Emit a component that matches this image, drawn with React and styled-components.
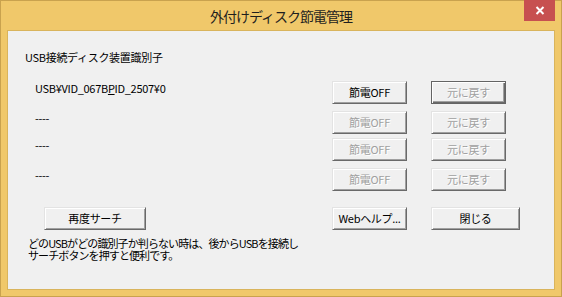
import React from "react";
import styled, { createGlobalStyle } from "styled-components";

const GlobalStyle = createGlobalStyle`
  html, body { margin: 0; padding: 0; background: #ffffff; }
  body { width: 562px; height: 297px; overflow: hidden; }
`;

const FONT = `"Noto Sans CJK JP", "Noto Sans", sans-serif`;

const Window = styled.div`
  box-sizing: border-box;
  width: 562px;
  height: 297px;
  background: #f0c86a;
  border: 1px solid #c9a24e;
  display: flex;
  flex-direction: column;
  font-family: ${FONT};
`;

const TitleBar = styled.div`
  height: 29px;
  display: grid;
  grid-template-columns: 1fr auto 1fr;
  align-items: center;
`;

const Title = styled.div`
  grid-column: 2;
  font-size: 14px;
  letter-spacing: -1px;
  color: #1e1e1e;
  line-height: 16px;
  padding-top: 1px;
`;

const CloseButton = styled.div`
  grid-column: 3;
  justify-self: end;
  align-self: start;
  margin-top: -1px;
  margin-right: 6px;
  width: 31px;
  height: 21px;
  background: #c75050;
  display: flex;
  align-items: center;
  justify-content: center;
`;

const Client = styled.div`
  flex: 1;
  margin: 0 6px 6px 6px;
  border: 1px solid #d9b45c;
  background: #f0f0f0;
  padding: 20px 0 0 17px;
  display: flex;
  flex-direction: column;
  font-size: 11px;
  line-height: 13px;
  letter-spacing: -0.3px;
  color: #000;
`;

const Label = styled.div`
  height: 13px;
`;

const Rows = styled.div`
  margin-top: 17px;
  margin-left: 10px;
  display: flex;
  flex-direction: column;
`;

const Row = styled.div`
  display: grid;
  grid-template-columns: 273px 75px 75px;
  column-gap: 24px;
  margin-top: ${(p) => p.$gap}px;
`;

const DeviceId = styled.div`
  align-self: start;
  padding-top: 1px;
  white-space: nowrap;
`;

const Button = styled.button`
  box-sizing: border-box;
  width: ${(p) => p.$w || 75}px;
  height: 23px;
  margin: 0;
  padding: 0;
  font-family: ${FONT};
  font-size: 11px;
  letter-spacing: -0.3px;
  line-height: 13px;
  background: #f0f0f0;
  border: 1px solid;
  border-color: ${(p) =>
    p.$default ? "#646464" : "#e3e3e3 #696969 #696969 #e3e3e3"};
  box-shadow: ${(p) =>
    p.$default
      ? "inset 1px 1px 0 #ffffff, inset -1px -1px 0 #696969, inset -2px -2px 0 #a0a0a0"
      : "inset 1px 1px 0 #ffffff, inset -1px -1px 0 #a0a0a0"};
  color: ${(p) => (p.disabled ? "#a0a0a0" : "#000000")};
  text-shadow: ${(p) => (p.disabled ? "1px 1px 0 #ffffff" : "none")};
  cursor: default;
  outline: none;
  border-radius: 0;
`;

const BottomBar = styled.div`
  margin-top: 16px;
  margin-left: 19px;
  display: grid;
  grid-template-columns: 102px 1fr 75px 89px;
  column-gap: 24px;
  width: 476px;
`;

const Note = styled.div`
  margin-top: 7px;
  margin-left: 3px;
  letter-spacing: -0.9px;
`;

const NoteLine = styled.div`
  height: 12px;
  line-height: 12px;
  white-space: nowrap;
`;

const rows = [
  { id: "first", gap: 0, enabled: true },
  { id: "----", gap: 7, enabled: false },
  { id: "----", gap: 4, enabled: false },
  { id: "----", gap: 7, enabled: false },
];

export default function App() {
  return (
    <>
      <GlobalStyle />
      <Window>
        <TitleBar>
          <Title>外付けディスク節電管理</Title>
          <CloseButton>
            <svg width="10" height="9" viewBox="0 0 10 9">
              <path d="M1.5 1 L8.5 8 M8.5 1 L1.5 8" stroke="#ffffff" strokeWidth="2" />
            </svg>
          </CloseButton>
        </TitleBar>
        <Client>
          <Label>USB接続ディスク装置識別子</Label>
          <Rows>
            {rows.map((r, i) => (
              <Row key={i} $gap={r.gap}>
                <DeviceId>
                  {r.id === "first" ? (
                    <>
                      USB¥VID_067B<u>P</u>ID_2507¥0
                    </>
                  ) : (
                    r.id
                  )}
                </DeviceId>
                <Button disabled={!r.enabled}>節電OFF</Button>
                <Button disabled $default={i === 0}>
                  元に戻す
                </Button>
              </Row>
            ))}
          </Rows>
          <BottomBar>
            <Button $w={102}>再度サーチ</Button>
            <span />
            <Button>Webヘルプ...</Button>
            <Button $w={89}>閉じる</Button>
          </BottomBar>
          <Note>
            <NoteLine>どのUSBがどの識別子か判らない時は、後からUSBを接続し</NoteLine>
            <NoteLine>サーチボタンを押すと便利です。</NoteLine>
          </Note>
        </Client>
      </Window>
    </>
  );
}
